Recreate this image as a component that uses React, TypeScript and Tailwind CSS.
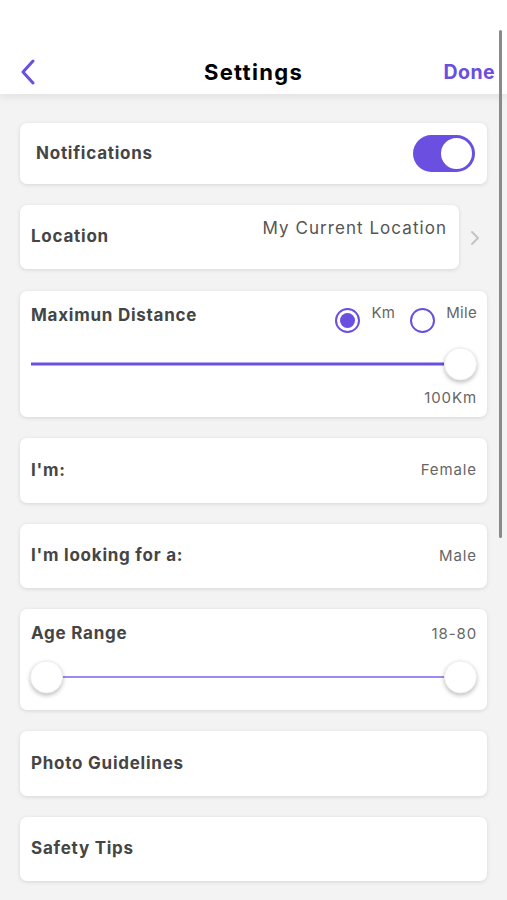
import React from 'react';

const purple = 'bg-[#6a4fe0]';

const Card = ({ children, className = '' }: { children: React.ReactNode; className?: string }) => (
  <div className={`bg-white rounded-[7px] shadow-[0_1px_4px_rgba(0,0,0,0.12)] ${className}`}>{children}</div>
);

const Label = ({ children }: { children: React.ReactNode }) => (
  <span className="text-[17px] font-bold text-[#454545] tracking-[0.75px]">{children}</span>
);

const Value = ({ children }: { children: React.ReactNode }) => (
  <span className="text-[15px] text-[#666] tracking-[0.9px]">{children}</span>
);

const Thumb = ({ className = '' }: { className?: string }) => (
  <div
    className={`absolute top-1/2 -translate-y-1/2 w-[33px] h-[33px] rounded-full bg-white shadow-[0_2px_4px_rgba(0,0,0,0.25)] border border-[#eeeeee] ${className}`}
  />
);

const Radio = ({ checked, label }: { checked: boolean; label: string }) => (
  <div className="flex items-start gap-[11px]">
    <div className="w-[25px] h-[25px] rounded-full border-[2.5px] border-[#6a4fe0] flex items-center justify-center mt-[4px]">
      {checked && <div className={`w-[15px] h-[15px] rounded-full ${purple}`} />}
    </div>
    <span className="text-[15px] text-[#666] leading-none mt-[1px] tracking-[0.3px]">{label}</span>
  </div>
);

export default function App() {
  return (
    <div className="relative w-[507px] h-[900px] overflow-hidden bg-[#f3f3f3] font-['Inter',sans-serif]">
      {/* header */}
      <div className="relative bg-white h-[94px] shadow-[0_3px_8px_rgba(0,0,0,0.08)] z-10">
        <div className="absolute left-0 right-0 top-[50px] flex items-center justify-between pl-[19px] pr-[12px] h-[44px]">
          <svg width="18" height="26" viewBox="0 0 18 26" fill="none">
            <path d="M14 2 L4 13 L14 24" stroke="#6a4fe0" strokeWidth="3" strokeLinecap="round" strokeLinejoin="round" />
          </svg>
          <span className="absolute left-1/2 -translate-x-1/2 text-[22px] font-bold text-black tracking-[1.3px]">Settings</span>
          <span className="text-[19.5px] font-bold text-[#6a4fe0] mt-[2px] tracking-[0.4px]">Done</span>
        </div>
      </div>

      {/* scroll indicator */}
      <div className="absolute left-[499px] top-[30px] w-[3px] h-[508px] rounded-full bg-[#8a8a8a] z-20" />

      <div className="flex flex-col gap-[21px] pt-[29px] pl-[20px] pr-[20px]">
        <Card className="h-[61px] flex items-center justify-between pl-[16px] pr-[12px]">
          <Label>Notifications</Label>
          <div className={`w-[62px] h-[37px] rounded-full ${purple} flex items-center justify-end pr-[1px]`}>
            <div className="w-[35px] h-[35px] rounded-full bg-white border-2 border-[#6a4fe0]" />
          </div>
        </Card>

        <div className="flex items-start h-[65px]">
          <Card className="w-[439px] h-[64px] flex justify-between pl-[11px] pr-[12px]">
            <div className="self-center mt-[-1px]">
              <Label>Location</Label>
            </div>
            <span className="text-[17px] text-[#555] tracking-[1.05px] mt-[11px]">My Current Location</span>
          </Card>
          <svg className="ml-[11px] self-center" width="10" height="16" viewBox="0 0 10 16" fill="none">
            <path d="M2 2 L8 8 L2 14" stroke="#c4c4c4" strokeWidth="2" strokeLinecap="round" strokeLinejoin="round" />
          </svg>
        </div>

        <Card className="h-[126px] flex flex-col pl-[11px] pr-[10px] pt-[13px]">
          <div className="flex items-start justify-between">
            <div className="mt-[-1px]">
              <Label>Maximun Distance</Label>
            </div>
            <div className="flex gap-[15px]">
              <Radio checked label="Km" />
              <Radio checked={false} label="Mile" />
            </div>
          </div>
          <div className="relative h-[33px] mt-[14px]">
            <div className={`absolute left-0 right-[32px] top-1/2 -translate-y-1/2 h-[3px] ${purple}`} />
            <Thumb className="right-0" />
          </div>
          <div className="text-right mt-[5px]">
            <Value>100Km</Value>
          </div>
        </Card>

        <Card className="h-[65px] flex items-center justify-between pl-[11px] pr-[10px]">
          <Label>I'm:</Label>
          <Value>Female</Value>
        </Card>

        <Card className="h-[64px] flex items-center justify-between pl-[11px] pr-[10px]">
          <Label>I'm looking for a:</Label>
          <Value>Male</Value>
        </Card>

        <Card className="h-[101px] flex flex-col pl-[10px] pr-[10px] pt-[12px]">
          <div className="flex items-center justify-between pl-[1px]">
            <Label>Age Range</Label>
            <Value>18-80</Value>
          </div>
          <div className="relative h-[33px] mt-[14px]">
            <div className="absolute left-[32px] right-[32px] top-1/2 -translate-y-1/2 h-[2px] bg-[#9c8af0]" />
            <Thumb className="left-0" />
            <Thumb className="right-0" />
          </div>
        </Card>

        <Card className="h-[65px] flex items-center pl-[11px]">
          <Label>Photo Guidelines</Label>
        </Card>

        <Card className="h-[64px] flex items-center pl-[11px]">
          <Label>Safety Tips</Label>
        </Card>
      </div>
    </div>
  );
}
